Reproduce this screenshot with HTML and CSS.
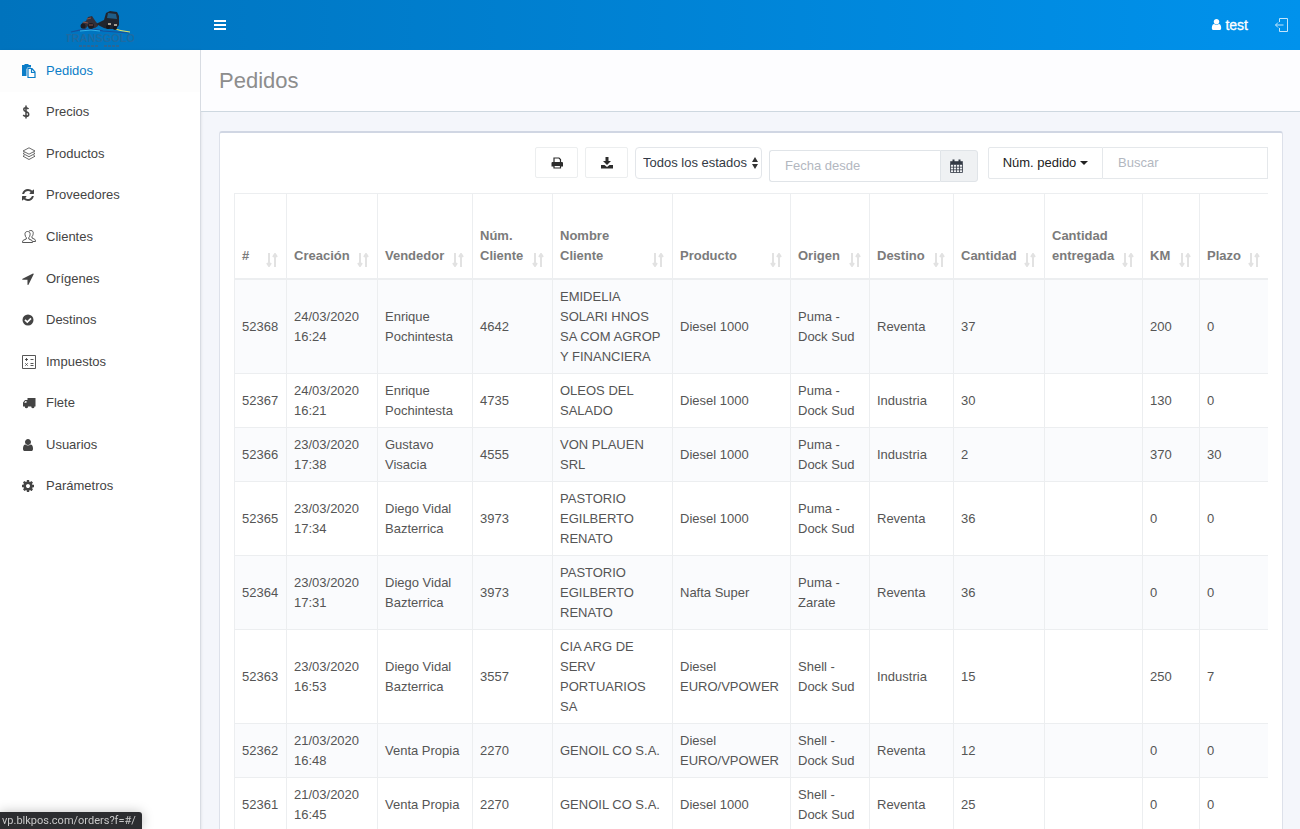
FILE: index.html
```html
<!DOCTYPE html>
<html lang="es">
<head>
    <meta charset="UTF-8">
    <meta name="viewport" content="width=device-width, initial-scale=1.0">
    <title>Pedidos</title>
    <link rel="stylesheet" href="styles.css">
</head>
<body>

    <svg class="sprite" aria-hidden="true">
        <symbol id="icon-sort" viewBox="0 0 12 14">
            <path d="M3 0v12M1 10L3 13l2-3M9 14V2M7 4L9 1l2 3" fill="none" stroke="currentColor" stroke-width="2"/>
        </symbol>
        <symbol id="icon-user" viewBox="0 0 1792 1792">
            <path d="M1536 1399q0 109-62.500 187t-150.500 78h-854q-88 0-150.500-78t-62.500-187q0-85 8.500-160.500t31.500-152 58.500-131 94-89 134.500-34.500q131 128 313 128t313-128q76 0 134.500 34.500t94 89 58.500 131 31.500 152 8.500 160.500zm-256-887q0 159-112.500 271.500t-271.500 112.500-271.500-112.500-112.500-271.500 112.500-271.500 271.500-112.500 271.500 112.500 112.500 271.500z"/>
        </symbol>
    </svg>

    <header class="topbar">
        <a class="logo" href="#" aria-label="Inicio">
            <svg width="68" height="40" viewBox="0 0 68 40">
                <path d="M5 24q18-5 32-1 14 1 26 2" fill="none" stroke="#15509c" stroke-width="1.200"/>
                <path d="M46 20q8 3 18 4" fill="none" stroke="#d9e36a" stroke-width="1.200"/>
                <path d="M14 23q12-2 20 0" fill="none" stroke="#2fb3e8"/>
                <path d="M16 15l4-2 2-4 4-1 2 3 2 3 2 2v2l-3 2h-5l-2-2-3 3-4-1z" fill="#33303a"/>
                <circle cx="17" cy="18" r="2.500" fill="#1d1b22"/>
                <circle cx="25" cy="18" r="3" fill="#1d1b22"/>
                <path d="M21 11l4-1M17 14l5 1M23 17h4" stroke="#8d5648" stroke-width="1"/>
                <path d="M30 16l8-4 2-7 4-2 7 1 2 4v9l-3 4H42l-4-1z" fill="#20252e"/>
                <path d="M42 5l8 1 1 5-10-1z" fill="#1f5d88"/>
                <path d="M42 16h3M48 17h3" stroke="#d6ccb8" stroke-width="1.500"/>
                <circle cx="42" cy="19" r="2" fill="#15161b"/>
                <circle cx="49" cy="20" r="2" fill="#15161b"/>
                <text class="logo-name" x="34" y="34" text-anchor="middle">TRANSGOLO</text>
                <path d="M13 38h20M38 38h15" stroke="#2a6796" stroke-width="2" stroke-dasharray="3 1"/>
            </svg>
        </a>
        <button class="menu-toggle" type="button" aria-label="Menú">
            <svg width="12" height="10" viewBox="0 0 12 10"><path d="M0 0h12v2H0zM0 4h12v2H0zM0 8h12v2H0z"/></svg>
        </button>
        <nav class="user-nav">
            <a class="user-link" href="#"><svg width="13" height="13"><use href="#icon-user"/></svg>test</a>
            <a class="logout" href="#" aria-label="Salir">
                <svg width="14" height="14" viewBox="0 0 14 14" fill="none" stroke="currentColor"><path d="M4.500 4V0.500h8v13h-8V10M0.500 7h8M3 4.500L0.500 7 3 9.500"/></svg>
            </a>
        </nav>
    </header>

    <div class="layout">
        <nav class="sidebar">
            <ul class="menu">
                <li><a class="active" href="#">
                    <svg width="14" height="14" viewBox="0 0 14 14"><path d="M0 1h2.500V0h4v1H9v2.500H5.500L4.500 5v7H0z"/><path d="M6 4.500h4l3 3.500v5.500H6zM9.500 4.500V8.500h3.500" fill="#fff" stroke="currentColor" stroke-width="1.200"/></svg>
                    Pedidos</a></li>
                <li><a href="#">
                    <svg width="14" height="14" viewBox="0 0 14 14"><path d="M6.500 4Q5.500 2.700 4 2.700 1.800 2.700 1.800 4.400 1.800 5.900 4 6.600 6.700 7.400 6.700 9.400 6.700 11.300 4 11.300 2.200 11.300 1.200 10M4 0.500v13" fill="none" stroke="currentColor" stroke-width="1.500"/></svg>
                    Precios</a></li>
                <li><a href="#">
                    <svg width="14" height="14" viewBox="0 0 14 14" fill="none" stroke="currentColor" stroke-width="0.800"><path d="M7 0.800L13 4 7 7.200 1 4zM2.500 5.600L1 6.500l6 3.200 6-3.200-1.500-0.900M2.500 8.300L1 9.200l6 3.300 6-3.300-1.500-0.900"/></svg>
                    Productos</a></li>
                <li><a href="#">
                    <svg width="12" height="12" viewBox="128 128 1536 1536"><path d="M1639 1056q0 5-1 7-64 268-268 434.500t-478 166.500q-146 0-282.500-55t-243.500-157l-129 129q-19 19-45 19t-45-19-19-45v-448q0-26 19-45t45-19h448q26 0 45 19t19 45-19 45l-137 137q71 66 161 102t187 36q134 0 250-65t186-179q11-17 53-117 8-23 30-23h192q13 0 22.500 9.500t9.500 22.500zm25-800v448q0 26-19 45t-45 19h-448q-26 0-45-19t-19-45 19-45l138-138q-148-137-349-137-134 0-250 65t-186 179q-11 17-53 117-8 23-30 23h-199q-13 0-22.500-9.500t-9.500-22.500v-7q65-268 270-434.500t480-166.500q146 0 284 55.500t245 156.500l130-129q19-19 45-19t45 19 19 45z"/></svg>
                    Proveedores</a></li>
                <li><a href="#">
                    <svg width="14" height="14" viewBox="0 0 14 14" fill="none" stroke="currentColor" stroke-width="0.900"><path d="M5.500 1.500C3.600 1.500 2.800 2.800 3 4.500 3.100 6 3.700 7 4.300 7.600V9L1.200 10.300Q0.500 10.800 0.500 12.500h10q0-1.700-0.700-2.200L6.800 9V7.600C7.500 7 8 6 8.100 4.500 8.300 2.800 7.500 1.500 5.500 1.500z"/><path d="M7 1.200Q7.600 0.500 8.800 0.500C10.800 0.500 11.400 2 11.200 3.500 11.100 5 10.500 6 10 6.500V8l2.800 1.300q0.700 0.500 0.700 2.200H11"/></svg>
                    Clientes</a></li>
                <li><a href="#">
                    <svg width="12" height="12" viewBox="192 192 1408 1472"><path d="M1593 349l-640 1280q-17 35-57 35-5 0-15-2-22-5-35.500-22.500t-13.500-39.500v-576h-576q-22 0-39.500-13.500t-22.500-35.500 4-42 29-30l1280-640q13-7 29-7 27 0 45 19 15 14 18.500 34.500t-6.500 39.500z"/></svg>
                    Orígenes</a></li>
                <li><a href="#">
                    <svg width="12" height="12" viewBox="0 0 12 12"><circle cx="6" cy="6" r="5.500"/><path d="M3 5.800l2.300 2.300L9 4.300" fill="none" stroke="#fff" stroke-width="1.700"/></svg>
                    Destinos</a></li>
                <li><a href="#">
                    <svg width="14" height="14" viewBox="0 0 14 14" fill="none" stroke="currentColor" stroke-width="0.900"><path d="M0.500 0.500h13v13H0.500z"/><path d="M3 4.500h3M4.500 3v3M8.500 4.500h3M3.300 8.300l2.400 2.400M5.700 8.300l-2.400 2.400M8.500 8.500h3M8.500 10.500h3"/></svg>
                    Impuestos</a></li>
                <li><a href="#">
                    <svg width="14" height="14" viewBox="0 0 14 14"><path d="M5.500 2H13.500v8.500h-1a1.600 1.600 0 0 1-3.200 0H6a1.600 1.600 0 0 1-3.200 0H1V6.500L3 4h2.500zM2.200 6.700h2.300V5H3.500z" fill-rule="evenodd"/><circle cx="4.400" cy="11" r="1.200"/><circle cx="10.900" cy="11" r="1.200"/></svg>
                    Flete</a></li>
                <li><a href="#">
                    <svg width="12" height="12" viewBox="192 128 1408 1536"><use href="#icon-user" width="1792" height="1792"/></svg>
                    Usuarios</a></li>
                <li><a href="#">
                    <svg width="12" height="12" viewBox="128 128 1536 1536"><path d="M1152 896q0-106-75-181t-181-75-181 75-75 181 75 181 181 75 181-75 75-181zm512-109v222q0 12-8 23t-20 13l-185 28q-19 54-39 91 35 50 107 138 10 12 10 25t-9 23q-27 37-99 108t-94 71q-12 0-26-9l-138-108q-44 23-91 38-16 136-29 186-7 28-36 28h-222q-14 0-24.500-8.500t-11.500-21.500l-28-184q-49-16-90-37l-141 107q-10 9-25 9-14 0-25-11-126-114-165-168-7-10-7-23 0-12 8-23 15-21 51-66.500t54-70.500q-27-50-41-99l-183-27q-13-2-21-12.500t-8-23.500v-222q0-12 8-23t19-13l186-28q14-46 39-92-40-57-107-138-10-12-10-24 0-10 9-23 26-36 98.500-107.500t94.500-71.500q13 0 26 10l138 107q44-23 91-38 16-136 29-186 7-28 36-28h222q14 0 24.500 8.500t11.500 21.500l28 184q49 16 90 37l142-107q9-9 24-9 13 0 25 10 129 119 165 170 7 8 7 22 0 12-8 23-15 21-51 66.500t-54 70.500q26 50 41 98l183 28q13 2 21 12.500t8 23.500z"/></svg>
                    Parámetros</a></li>
            </ul>
        </nav>

        <main class="content">
            <div class="page-title">
                <h1>Pedidos</h1>
            </div>

            <section class="card">
                <form class="toolbar">
                    <button class="btn" type="button" aria-label="Imprimir">
                        <svg width="12" height="12" viewBox="0 0 12 12"><path d="M3 5V1h5l1.500 1.500V5M3 8.500h6.500V11H3z" fill="none" stroke="currentColor" stroke-width="1.200"/><path d="M1.500 5h9.500q1 0 1 1v3.500H9.500v-1.500H3v1.500H0.500V6q0-1 1-1z"/></svg>
                    </button>
                    <button class="btn" type="button" aria-label="Descargar">
                        <svg width="12" height="12" viewBox="0 0 12 12"><path d="M4.500 0h3v4H10L6 8 2 4h2.500z"/><path d="M0 8h3.500L6 10l2.500-2H12v3.500H0z"/></svg>
                    </button>
                    <div class="select-wrap">
                        <select aria-label="Estado">
                            <option>Todos los estados</option>
                        </select>
                        <svg class="select-arrows" width="6" height="12" viewBox="0 0 6 12"><path d="M3 0l3 5H0zM3 12L0 7h6z"/></svg>
                    </div>
                    <div class="date-group">
                        <input type="text" placeholder="Fecha desde" aria-label="Fecha desde">
                        <button class="addon" type="button" aria-label="Abrir calendario">
                            <svg width="13" height="14" viewBox="0 0 13 14" fill="none" stroke="currentColor"><path d="M0.500 2.500h12v11h-12zM0.500 5.500h12M0.500 8.200h12M0.500 10.800h12M3.500 5.500v8M6.500 5.500v8M9.500 5.500v8" stroke-width="0.800"/><path d="M1 3h11v2H1z" fill="currentColor" stroke="none"/><path d="M3.500 0.500v3M9.500 0.500v3" stroke-width="2"/></svg>
                        </button>
                    </div>
                    <div class="search-group">
                        <button class="filter" type="button">Núm. pedido
                            <svg width="8" height="4" viewBox="0 0 8 4"><path d="M0 0h8L4 4z"/></svg>
                        </button>
                        <input type="text" placeholder="Buscar" aria-label="Buscar">
                    </div>
                </form>

                <div class="table-wrap">
                    <table class="orders">
                        <colgroup>
                            <col class="c-id"><col class="c-created"><col class="c-seller"><col class="c-num">
                            <col class="c-client"><col class="c-product"><col class="c-origin"><col class="c-target">
                            <col class="c-qty"><col class="c-delivered"><col class="c-km"><col class="c-term">
                        </colgroup>
                        <thead>
                            <tr>
                                <th><div><span>#</span><svg><use href="#icon-sort"/></svg></div></th>
                                <th><div><span>Creación</span><svg><use href="#icon-sort"/></svg></div></th>
                                <th><div><span>Vendedor</span><svg><use href="#icon-sort"/></svg></div></th>
                                <th><div><span>Núm.<br>Cliente</span><svg><use href="#icon-sort"/></svg></div></th>
                                <th><div><span>Nombre<br>Cliente</span><svg><use href="#icon-sort"/></svg></div></th>
                                <th><div><span>Producto</span><svg><use href="#icon-sort"/></svg></div></th>
                                <th><div><span>Origen</span><svg><use href="#icon-sort"/></svg></div></th>
                                <th><div><span>Destino</span><svg><use href="#icon-sort"/></svg></div></th>
                                <th><div><span>Cantidad</span><svg><use href="#icon-sort"/></svg></div></th>
                                <th><div><span>Cantidad<br>entregada</span><svg><use href="#icon-sort"/></svg></div></th>
                                <th><div><span>KM</span><svg><use href="#icon-sort"/></svg></div></th>
                                <th><div><span>Plazo</span><svg><use href="#icon-sort"/></svg></div></th>
                            </tr>
                        </thead>
                        <tbody>
                            <tr><td>52368</td><td>24/03/2020 16:24</td><td>Enrique Pochintesta</td><td>4642</td><td>EMIDELIA SOLARI HNOS SA COM AGROP Y FINANCIERA</td><td>Diesel 1000</td><td>Puma - Dock Sud</td><td>Reventa</td><td>37</td><td></td><td>200</td><td>0</td></tr>
                            <tr><td>52367</td><td>24/03/2020 16:21</td><td>Enrique Pochintesta</td><td>4735</td><td>OLEOS DEL SALADO</td><td>Diesel 1000</td><td>Puma - Dock Sud</td><td>Industria</td><td>30</td><td></td><td>130</td><td>0</td></tr>
                            <tr><td>52366</td><td>23/03/2020 17:38</td><td>Gustavo Visacia</td><td>4555</td><td>VON PLAUEN SRL</td><td>Diesel 1000</td><td>Puma - Dock Sud</td><td>Industria</td><td>2</td><td></td><td>370</td><td>30</td></tr>
                            <tr><td>52365</td><td>23/03/2020 17:34</td><td>Diego Vidal Bazterrica</td><td>3973</td><td>PASTORIO EGILBERTO RENATO</td><td>Diesel 1000</td><td>Puma - Dock Sud</td><td>Reventa</td><td>36</td><td></td><td>0</td><td>0</td></tr>
                            <tr><td>52364</td><td>23/03/2020 17:31</td><td>Diego Vidal Bazterrica</td><td>3973</td><td>PASTORIO EGILBERTO RENATO</td><td>Nafta Super</td><td>Puma - Zarate</td><td>Reventa</td><td>36</td><td></td><td>0</td><td>0</td></tr>
                            <tr><td>52363</td><td>23/03/2020 16:53</td><td>Diego Vidal Bazterrica</td><td>3557</td><td>CIA ARG DE SERV PORTUARIOS SA</td><td>Diesel EURO/VPOWER</td><td>Shell - Dock Sud</td><td>Industria</td><td>15</td><td></td><td>250</td><td>7</td></tr>
                            <tr><td>52362</td><td>21/03/2020 16:48</td><td>Venta Propia</td><td>2270</td><td>GENOIL CO S.A.</td><td>Diesel EURO/VPOWER</td><td>Shell - Dock Sud</td><td>Reventa</td><td>12</td><td></td><td>0</td><td>0</td></tr>
                            <tr><td>52361</td><td>21/03/2020 16:45</td><td>Venta Propia</td><td>2270</td><td>GENOIL CO S.A.</td><td>Diesel 1000</td><td>Shell - Dock Sud</td><td>Reventa</td><td>25</td><td></td><td>0</td><td>0</td></tr>
                        </tbody>
                    </table>
                </div>
            </section>
        </main>
    </div>

    <div class="status">vp.blkpos.com/orders?f=#/</div>

</body>
</html>
```
FILE: styles.css
```css
* {
    box-sizing: border-box;
}

body {
    margin: 0;
    min-height: 100vh;
    display: flex;
    flex-direction: column;
    font-family: "Liberation Sans", Arial, sans-serif;
    font-size: 13px;
    line-height: 20px;
    color: #555;
    background-color: #f4f6fb;
}

svg {
    display: block;
    flex: none;
    fill: currentColor;
}

svg[fill="none"] {
    fill: none;
}

a {
    color: inherit;
    text-decoration: none;
}

button,
input,
select {
    font: inherit;
    margin: 0;
}

.sprite {
    position: absolute;
    width: 0;
    height: 0;
}

/* Top bar */
.topbar {
    display: flex;
    align-items: center;
    height: 50px;
    padding-bottom: 1px;
    color: #fff;
    background: linear-gradient(to right, #0073bd, #0092ec);
}

.logo {
    width: 200px;
    padding-top: 7px;
    display: flex;
    justify-content: center;
}

.logo-name {
    font-size: 11px;
    font-weight: bold;
    fill: #2a6796;
    opacity: 0.7;
}

.menu-toggle {
    margin-left: 14px;
    padding: 8px 0;
    border: none;
    background: none;
    color: #fff;
    cursor: pointer;
}

.user-nav {
    margin-left: auto;
    padding-right: 11px;
    display: flex;
    align-items: center;
    gap: 27px;
}

.user-link {
    display: flex;
    align-items: center;
    gap: 2px;
    font-size: 14px;
    -webkit-text-stroke: 0.3px #fff;
}

.logout {
    color: #c3e5fb;
}

/* Sidebar */
.layout {
    flex: 1;
    display: flex;
}

.sidebar {
    width: 201px;
    flex: none;
    background-color: #fff;
    border-right: 1px solid #d8dce3;
    box-shadow: 1px 0 2px rgba(0, 0, 0, 0.06);
}

.menu {
    height: 457px;
    margin: 0;
    padding: 0;
    list-style: none;
    display: flex;
    flex-direction: column;
}

.menu li {
    flex: 1;
    display: flex;
}

.menu a {
    flex: 1;
    display: grid;
    grid-template-columns: 14px 1fr;
    align-items: center;
    gap: 10px;
    padding-left: 22px;
    color: #444;
}

.menu a.active {
    color: #0b7dc8;
    background-color: #fdfdfd;
}

/* Content */
.content {
    flex: 1;
    min-width: 0;
}

.page-title {
    padding: 15px 18px;
    background-color: #fdfdff;
    border-bottom: 1px solid #ced8e0;
}

h1 {
    margin: 0;
    font-size: 22px;
    line-height: 31px;
    font-weight: normal;
    color: #8d8d8d;
}

.card {
    margin: 19px 17px 19px 18px;
    padding: 14px 14px 20px;
    background-color: #fff;
    border: 1px solid #dde1ea;
    border-top: 2px solid #d0d6e3;
    border-radius: 3px;
}

.toolbar {
    display: flex;
    justify-content: flex-end;
    align-items: flex-start;
    gap: 7px;
    height: 46px;
    color: #333;
}

.btn {
    width: 43px;
    height: 31px;
    display: flex;
    align-items: center;
    justify-content: center;
    color: #2c2c2c;
    background-color: #fff;
    border: 1px solid #eceeef;
    border-radius: 2px;
}

.select-wrap {
    position: relative;
    width: 127px;
}

.select-wrap select {
    width: 100%;
    height: 32px;
    padding: 0 7px;
    appearance: none;
    color: #333a45;
    background-color: #fff;
    border: 1px solid #e3e6ea;
    border-radius: 4px;
}

.select-arrows {
    position: absolute;
    right: 4px;
    top: 10px;
    pointer-events: none;
}

.date-group {
    display: flex;
    width: 209px;
    height: 32px;
    margin-top: 3px;
}

.date-group input {
    flex: 1;
    min-width: 0;
    padding: 0 15px;
    border: 1px solid #e0e4e8;
    border-right: none;
    border-radius: 3px 0 0 3px;
}

.addon {
    width: 38px;
    display: flex;
    align-items: center;
    padding: 0 9px;
    color: #333a45;
    background-color: #eff1f3;
    border: 1px solid #e0e4e8;
    border-radius: 0 3px 3px 0;
}

.search-group {
    display: flex;
    width: 280px;
    height: 32px;
    margin-left: 3px;
}

.filter {
    display: flex;
    align-items: center;
    justify-content: center;
    gap: 4px;
    width: 115px;
    padding: 0;
    color: #222;
    background-color: #fff;
    border: 1px solid #e5e8eb;
    border-radius: 2px 0 0 2px;
}

.search-group input {
    flex: 1;
    min-width: 0;
    padding: 0 15px;
    border: 1px solid #e5e8eb;
    border-left: none;
    border-radius: 0;
}

input::placeholder {
    color: #b3b7bf;
    opacity: 1;
}

/* Orders table */
.table-wrap {
    overflow-x: auto;
}

.orders {
    width: 100%;
    min-width: 1034px;
    table-layout: fixed;
    border-collapse: separate;
    border-spacing: 0;
    border-top: 1px solid #eceef0;
}

.orders th,
.orders td {
    padding: 7px 7px 6px;
    text-align: left;
    border-left: 1px solid #eceef0;
    border-bottom: 1px solid #eceef0;
}

.orders th {
    height: 86px;
    padding-right: 8px;
    padding-bottom: 11px;
    vertical-align: bottom;
    color: #7b7b7b;
    border-bottom-width: 2px;
}

.orders th div {
    display: flex;
    align-items: flex-end;
    justify-content: space-between;
}

.orders th span {
    padding-bottom: 1px;
    white-space: nowrap;
}

.orders th svg {
    width: 12px;
    height: 14px;
    color: #e2e2e2;
}

.orders tbody tr:nth-child(odd) td {
    background-color: #fafbfd;
}

.c-id { width: 52px; }
.c-created { width: 91px; }
.c-seller { width: 95px; }
.c-num { width: 80px; }
.c-client { width: 120px; }
.c-product { width: 118px; }
.c-origin { width: 79px; }
.c-target { width: 84px; }
.c-qty { width: 91px; }
.c-delivered { width: 98px; }
.c-km { width: 57px; }

/* Link preview over the page corner */
.status {
    position: fixed;
    left: 0;
    bottom: 0;
    padding: 1px 6px 0 2px;
    font-family: Roboto, sans-serif;
    font-size: 11px;
    line-height: 16px;
    color: #c8c8c8;
    background-color: #2c2d30;
    border-radius: 0 3px 0 0;
    box-shadow: 0 0 12px rgba(0, 0, 0, 0.25);
}
```
